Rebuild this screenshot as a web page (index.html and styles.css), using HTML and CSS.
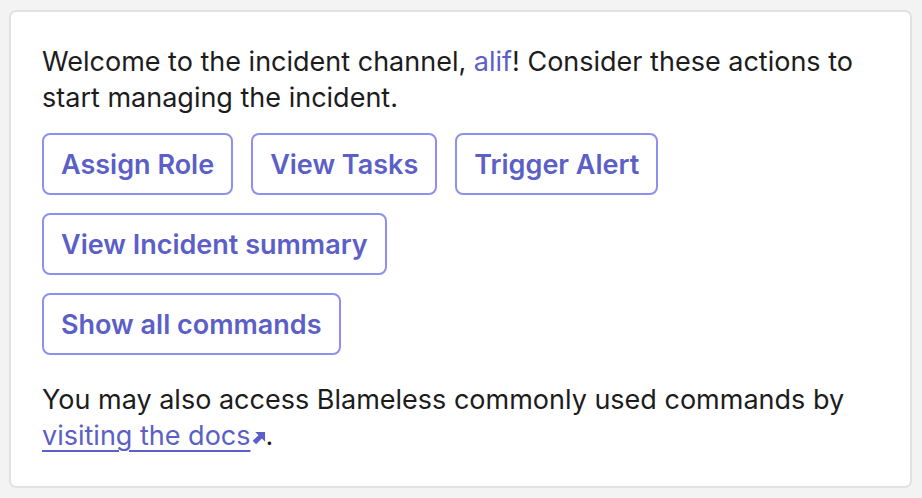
FILE: index.html
```html
<!DOCTYPE html>
<html lang="en">
  <head>
    <meta charset="UTF-8" />
    <meta name="viewport" content="width=device-width, initial-scale=1.0" />
    <title>Incident Channel</title>
    <link rel="stylesheet" href="styles.css">
  </head>
  <body>
    <div class="card">
      <p class="intro">
        Welcome to the incident channel, <span class="mention">alif</span>! Consider these actions to
        start managing the incident.
      </p>
      <div class="actions">
        <button class="action">Assign Role</button>
        <button class="action">View Tasks</button>
        <button class="action">Trigger Alert</button>
      </div>
      <div class="actions">
        <button class="action">View Incident summary</button>
      </div>
      <div class="actions">
        <button class="action">Show all commands</button>
      </div>
      <p class="outro">
        You may also access Blameless commonly used commands by
        <a href="#" class="docs-link">visiting the docs<svg class="ext" viewBox="0 0 16 16" width="15" height="15"><path d="M4.5 1h10.5v10.5l-3.4-3.4-6.1 6.1-3.7-3.7 6.1-6.1z" fill="currentColor"/></svg></a>.
      </p>
    </div>
  </body>
</html>
```

FILE: styles.css
```css
body {
  margin: 0;
  padding: 10px 10px 10px 9px;
  background-color: #f3f3f3;
  font-family: Inter, "Liberation Sans", sans-serif;
  color: #1d1c1d;
}
.card {
  background-color: white;
  border: 2px solid #e2e2e2;
  border-radius: 7px;
  padding: 32px 30px 20px 31px;
  height: 478px;
  box-sizing: border-box;
}
.intro,
.outro {
  font-size: 27px;
  line-height: 36px;
  margin: 0;
}
.intro {
  margin-bottom: 17px;
}
.mention {
  color: #5b5fc7;
}
.actions {
  display: flex;
  gap: 18px;
  margin-bottom: 18px;
}
.action {
  font-family: Inter, "Liberation Sans", sans-serif;
  font-size: 27px;
  font-weight: 600;
  color: #5b5fc7;
  background-color: white;
  border: 2px solid #8d90ec;
  border-radius: 8px;
  height: 62px;
  padding: 0 17px;
  cursor: pointer;
}
.outro {
  margin-top: 27px;
}
.docs-link {
  color: #5b5fc7;
  text-decoration: underline;
  text-underline-offset: 5px;
  text-decoration-thickness: 2px;
}
.ext {
  vertical-align: -1px;
}
```
